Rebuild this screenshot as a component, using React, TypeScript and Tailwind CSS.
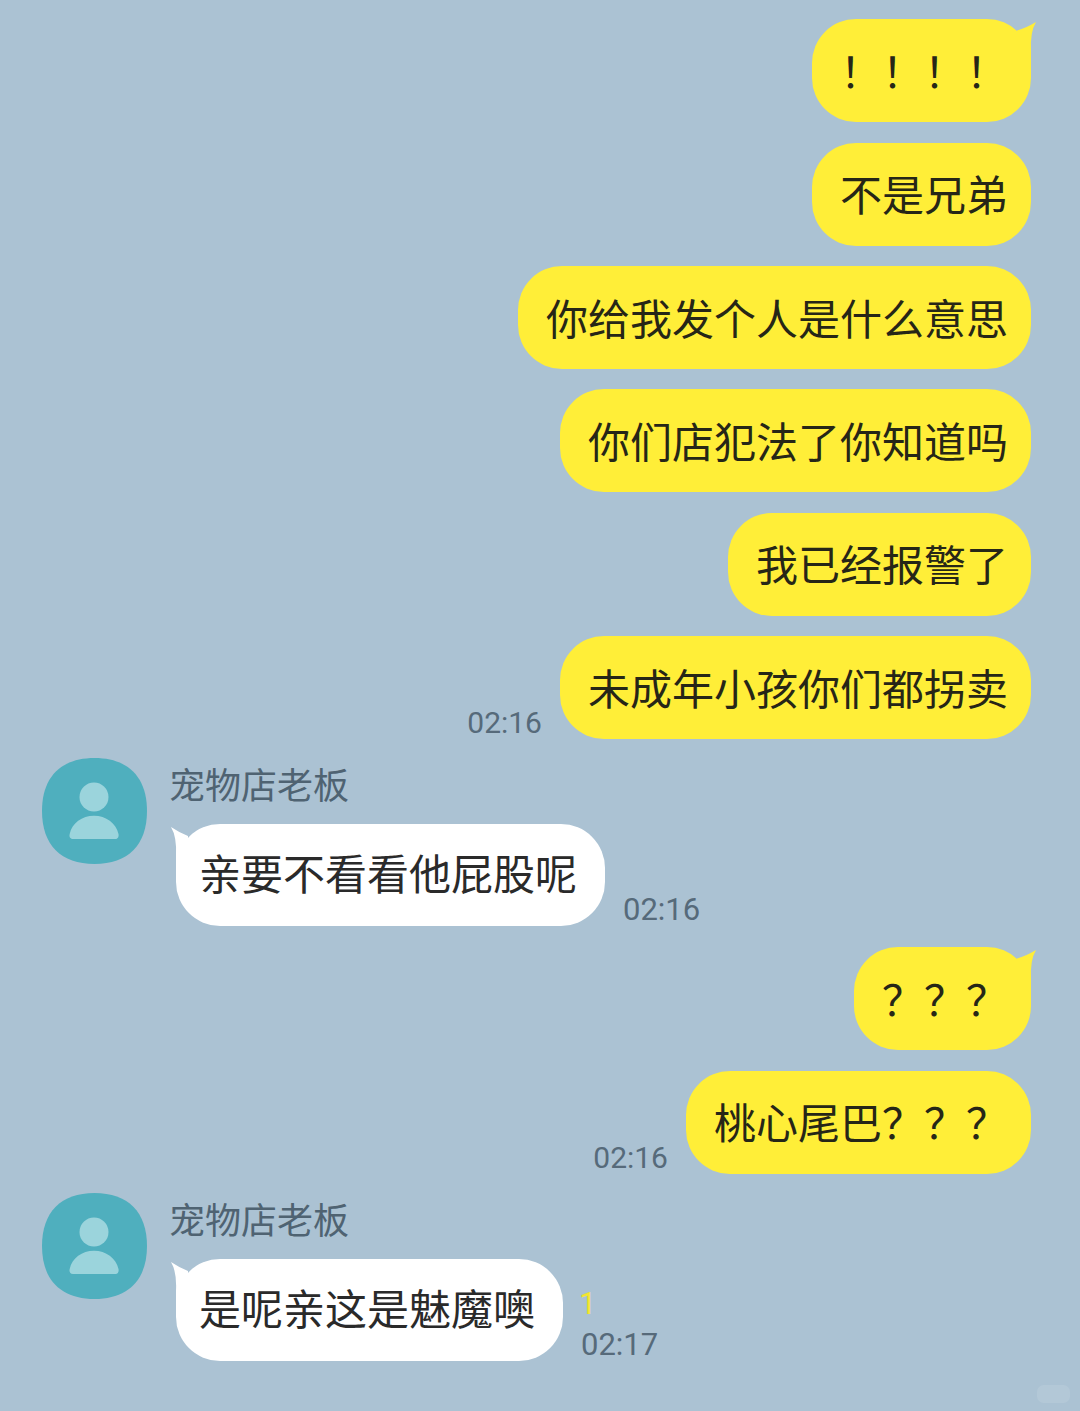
const cjk = "font-['Noto_Sans_CJK_SC',sans-serif]";

function SentBubble({ text, tail, time }: { text: string; tail?: boolean; time?: string }) {
  return (
    <div className="flex items-end">
      {time && <span className="mr-[18px] mb-[-2px] h-[36px] font-['Roboto',sans-serif] text-[30px] leading-[36px] text-[#566a7a]">{time}</span>}
      <div className="relative flex h-[103px] items-center rounded-[44px] bg-[#ffee38] pb-[2px] pl-[28px] pr-[23px] text-[42px] leading-none text-[#262617]">
        {text}
        {tail && (
          <svg className="absolute right-[-6px] top-[2px]" width="26" height="42" viewBox="0 0 26 42">
            <path d="M6 9.5 Q15 7 25 1 Q19 11 20 30 L20 42 L6 42 Z" fill="#ffee38" />
          </svg>
        )}
      </div>
    </div>
  );
}

function Received({ text, time, read }: { text: string; time: string; read?: boolean }) {
  return (
    <div className="flex pl-[42px]">
      <svg className="shrink-0" width="105" height="106" viewBox="0 0 105 106">
        <path d="M52.5 0 C86 0 105 19 105 53 C105 87 86 106 52.5 106 C19 106 0 87 0 53 C0 19 19 0 52.5 0 Z" fill="#4fafbe" />
        <circle cx="52" cy="39" r="14.5" fill="#9bd4dc" />
        <path d="M31 81 C28 81 27 78.5 27.7 76 C30 65 40 57.7 52 57.7 C64 57.7 74 65 76.5 76 C77 78.5 76 81 73.5 81 Z" fill="#9bd4dc" />
      </svg>
      <div className="ml-[22px] flex flex-col">
        <div className="h-[66px] pt-[5px] text-[36px] leading-[40px] text-[#4f6372]">宠物店老板</div>
        <div className="flex items-end">
          <div className="relative ml-[7px] flex h-[102px] items-center rounded-[44px] bg-white pb-[6px] pl-[23px] pr-[28px] text-[42px] leading-none text-[#2a2a2a]">
            {text}
            <svg className="absolute left-[-6px] top-[2px]" width="26" height="42" viewBox="0 0 26 42">
              <path d="M18 10 Q10 7 1 1 Q7 11 6 30 L6 42 L18 42 Z" fill="#ffffff" />
            </svg>
          </div>
          <div className="ml-[18px] mb-[-2px] flex flex-col font-['Roboto',sans-serif]">
            {read && <span className="mb-[8px] ml-[-2px] h-[31px] text-[31px] leading-[31px] text-[#f3e52f]">1</span>}
            <span className="h-[36px] text-[31px] leading-[36px] text-[#566a7a]">{time}</span>
          </div>
        </div>
      </div>
    </div>
  );
}

export default function App() {
  return (
    <div className={`relative flex h-[1411px] w-[1080px] flex-col overflow-hidden bg-[#abc2d3] pt-[19.3px] ${cjk}`}>
      <div className="flex flex-col items-end gap-[20.4px] pr-[49px]">
        <SentBubble text="！！！！" tail />
        <SentBubble text="不是兄弟" />
        <SentBubble text="你给我发个人是什么意思" />
        <SentBubble text="你们店犯法了你知道吗" />
        <SentBubble text="我已经报警了" />
        <SentBubble text="未成年小孩你们都拐卖" time="02:16" />
      </div>
      <div className="mt-[18.7px]">
        <Received text="亲要不看看他屁股呢" time="02:16" />
      </div>
      <div className="mt-[21.4px] flex flex-col items-end gap-[20.4px] pr-[49px]">
        <SentBubble text="？？？" tail />
        <SentBubble text="桃心尾巴？？？" time="02:16" />
      </div>
      <div className="mt-[19.4px]">
        <Received text="是呢亲这是魅魔噢" time="02:17" read />
      </div>
      {/* faint watermark */}
      <div className="absolute left-[1037px] top-[1385px] h-[18px] w-[33px] rounded-[7px] bg-white/10" />
    </div>
  );
}
